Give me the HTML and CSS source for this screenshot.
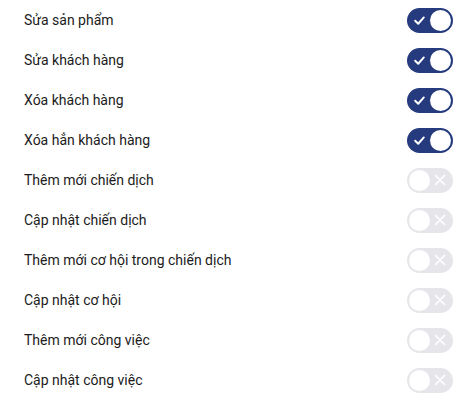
FILE: index.html
```html
<!DOCTYPE html>
<html lang="vi">
<head>
<meta charset="utf-8">
<link rel="stylesheet" href="styles.css">
</head>
<body>
<ul class="list">
  <li class="row"><span class="label">Sửa sản phẩm</span><span class="switch on"><svg class="icon" viewBox="0 0 12 12"><path d="M2 6.2 L4.8 9 L10 3.2"/></svg><span class="thumb"></span></span></li>
  <li class="row"><span class="label">Sửa khách hàng</span><span class="switch on"><svg class="icon" viewBox="0 0 12 12"><path d="M2 6.2 L4.8 9 L10 3.2"/></svg><span class="thumb"></span></span></li>
  <li class="row"><span class="label">Xóa khách hàng</span><span class="switch on"><svg class="icon" viewBox="0 0 12 12"><path d="M2 6.2 L4.8 9 L10 3.2"/></svg><span class="thumb"></span></span></li>
  <li class="row"><span class="label">Xóa hẳn khách hàng</span><span class="switch on"><svg class="icon" viewBox="0 0 12 12"><path d="M2 6.2 L4.8 9 L10 3.2"/></svg><span class="thumb"></span></span></li>
  <li class="row"><span class="label">Thêm mới chiến dịch</span><span class="switch off"><span class="thumb"></span><svg class="icon" viewBox="0 0 12 12"><path d="M1.5 1.5 L10.5 10.5 M10.5 1.5 L1.5 10.5"/></svg></span></li>
  <li class="row"><span class="label">Cập nhật chiến dịch</span><span class="switch off"><span class="thumb"></span><svg class="icon" viewBox="0 0 12 12"><path d="M1.5 1.5 L10.5 10.5 M10.5 1.5 L1.5 10.5"/></svg></span></li>
  <li class="row"><span class="label">Thêm mới cơ hội trong chiến dịch</span><span class="switch off"><span class="thumb"></span><svg class="icon" viewBox="0 0 12 12"><path d="M1.5 1.5 L10.5 10.5 M10.5 1.5 L1.5 10.5"/></svg></span></li>
  <li class="row"><span class="label">Cập nhật cơ hội</span><span class="switch off"><span class="thumb"></span><svg class="icon" viewBox="0 0 12 12"><path d="M1.5 1.5 L10.5 10.5 M10.5 1.5 L1.5 10.5"/></svg></span></li>
  <li class="row"><span class="label">Thêm mới công việc</span><span class="switch off"><span class="thumb"></span><svg class="icon" viewBox="0 0 12 12"><path d="M1.5 1.5 L10.5 10.5 M10.5 1.5 L1.5 10.5"/></svg></span></li>
  <li class="row"><span class="label">Cập nhật công việc</span><span class="switch off"><span class="thumb"></span><svg class="icon" viewBox="0 0 12 12"><path d="M1.5 1.5 L10.5 10.5 M10.5 1.5 L1.5 10.5"/></svg></span></li>
</ul>
</body>
</html>
```
FILE: styles.css
```css
html, body {
  margin: 0;
  padding: 0;
  background: #ffffff;
}
body {
  font-family: Roboto, "Noto Sans", sans-serif;
  font-size: 14px;
  color: #1b1b1b;
}
.list {
  list-style: none;
  margin: 0;
  padding: 0 8px 0 24px;
}
.row {
  height: 40px;
  display: flex;
  align-items: center;
  justify-content: space-between;
}
.switch {
  width: 46px;
  height: 25px;
  border-radius: 13px;
  box-sizing: border-box;
  padding: 2px;
  display: flex;
  align-items: center;
  justify-content: space-between;
}
.switch.on {
  background: #263a7e;
  padding-left: 6px;
}
.switch.off {
  background: #e6e6ea;
  padding-right: 7px;
}
.thumb {
  width: 21px;
  height: 21px;
  border-radius: 50%;
  background: #ffffff;
}
.icon {
  width: 13px;
  height: 13px;
  fill: none;
  stroke-width: 1.8;
  stroke-linecap: round;
  stroke-linejoin: round;
}
.on .icon { stroke: #ffffff; }
.off .icon { stroke: #ffffff; stroke-width: 1.7; width: 12px; height: 12px; }
```
